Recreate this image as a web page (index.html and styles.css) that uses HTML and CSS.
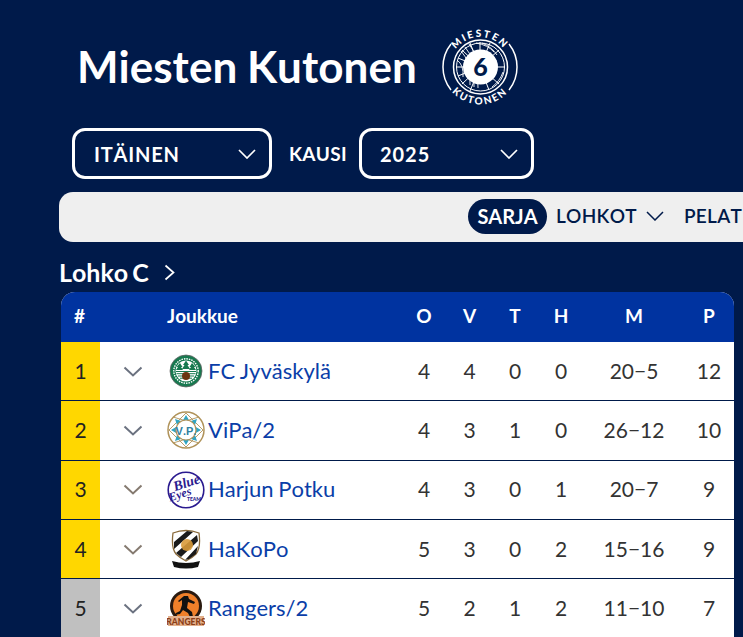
FILE: index.html
```html
<!DOCTYPE html>
<html lang="fi">
<head>
<meta charset="utf-8">
<title>Miesten Kutonen</title>
<link rel="stylesheet" href="styles.css">
</head>
<body>
<main class="page">
  <header class="head">
    <h1 class="title">Miesten Kutonen</h1>
    <svg class="brand" width="80" height="84" viewBox="0 0 80 84">
      <defs>
        <path id="arcTop" d="M10 42a30 30 0 0 1 60 0"/>
        <path id="arcBot" d="M2.500 42a37.500 37.500 0 0 0 75 0"/>
      </defs>
      <text class="brand-t"><textPath href="#arcTop" startOffset="50%" text-anchor="middle">MIESTEN</textPath></text>
      <text class="brand-t"><textPath href="#arcBot" startOffset="50%" text-anchor="middle">KUTONEN</textPath></text>
      <path class="brand-l" d="M11 19A37 37 0 0 0 11 65M69 19A37 37 0 0 1 69 65" stroke-width="1.500"/>
      <circle class="brand-l" cx="40.500" cy="42" r="27" stroke-width="1.500"/>
      <circle class="brand-l" cx="40.500" cy="42" r="24" stroke-width="1"/>
      <path class="brand-l" stroke-width="1" d="M18 33L40 42M16 42H40M18 51L40 42M22 25L40 42M22 59L40 42M30 18L40 42M30 66L40 42M40 17V42M50 18L40 42M49 65L40 42M59 25L40 42M59 59L40 42M65 42H40"/>
      <path class="brand-l" stroke-width=".9" d="M17 35Q24 40 23 52M21 26Q31 36 30 60M25 22Q35 32 34 62M29 19Q38 28 38 63M42 18Q52 22 57 30M36 18Q48 20 54 27M52 62Q60 56 63 47"/>
      <circle class="brand-c" cx="40.500" cy="42" r="17.500"/>
      <text class="brand-6" x="40.500" y="51" text-anchor="middle">6</text>
    </svg>
  </header>

  <div class="filters">
    <div class="select select-wide"><span>ITÄINEN</span>
      <svg class="chev" width="18" height="10" viewBox="0 0 18 10"><path d="M1 1l8 8 8-8"/></svg>
    </div>
    <span class="filter-label">KAUSI</span>
    <div class="select select-narrow"><span>2025</span>
      <svg class="chev" width="18" height="10" viewBox="0 0 18 10"><path d="M1 1l8 8 8-8"/></svg>
    </div>
  </div>

  <nav class="nav">
    <span class="pill">SARJA</span>
    <span class="nav-item">LOHKOT
      <svg class="nav-chev" width="18" height="10" viewBox="0 0 18 10"><path d="M1 1l8 8 8-8"/></svg>
    </span>
    <span class="nav-item nav-last">PELAT</span>
  </nav>

  <h2 class="group">Lohko C
    <svg class="group-chev" width="11" height="17" viewBox="0 0 11 17"><path d="M1.500 1.500l8 7-8 7"/></svg>
  </h2>

  <section class="table">
    <div class="row row-head">
      <span class="c-rank">#</span><span></span><span class="c-team">Joukkue</span>
      <span class="num">O</span><span class="num">V</span><span class="num">T</span><span class="num">H</span><span class="num">M</span><span class="num">P</span>
    </div>

    <div class="row">
      <span class="c-rank yellow">1</span>
      <span class="c-exp"><svg class="exp" width="20" height="11" viewBox="0 0 20 11"><path d="M1.500 1.500l8.500 8 8.500-8"/></svg></span>
      <span class="c-team">
        <svg class="crest" width="38" height="38" viewBox="0 0 38 38">
          <circle cx="19" cy="19" r="16" fill="#17794f" stroke="#666" stroke-width=".8"/>
          <circle cx="19" cy="19" r="12.200" fill="none" stroke="#fff" stroke-width="1.400" stroke-dasharray="1.500 1"/>
          <circle cx="19" cy="19" r="10.500" fill="#fff"/>
          <path fill="#17794f" d="M19 8.500l3 4.500h-1.500l2.500 4h-8l2.500-4H16zM13 11l2.500 4H14l2 3h-7l2-3H9.500zM25 11l-2.500 4H24l-2 3h7l-2-3h1.500z"/>
          <path stroke="#17794f" stroke-width="1" d="M9 19.500h20M9.500 21.700h19M11 24h16M13 26.200h12"/>
          <circle cx="19" cy="24" r="4" fill="#6b3410"/>
        </svg>
        <a class="name">FC Jyväskylä</a>
      </span>
      <span class="num">4</span><span class="num">4</span><span class="num">0</span><span class="num">0</span><span class="num">20−5</span><span class="num">12</span>
    </div>

    <div class="row">
      <span class="c-rank yellow">2</span>
      <span class="c-exp"><svg class="exp" width="20" height="11" viewBox="0 0 20 11"><path d="M1.500 1.500l8.500 8 8.500-8"/></svg></span>
      <span class="c-team">
        <svg class="crest" width="38" height="38" viewBox="0 0 38 38">
          <circle cx="19" cy="19" r="18" fill="#fff" stroke="#b0935a" stroke-width="1.500"/>
          <path fill="none" stroke="#b0935a" stroke-width=".9" d="M19 2L26 9 36 19 26 29 19 36 12 29 2 19 12 9zM6 6L16 9M32 6L22 9M6 32L16 29M32 32L22 29"/>
          <path fill="#2fa5c4" d="M19 4l3.500 6h-7zM19 34l-3.500-6h7zM4 19l6-3.500v7zM34 19l-6 3.500v-7zM8 8l6 2-4 4zM30 8l-2 6-4-4zM8 30l2-6 4 4zM30 30l-6-2 4-4z"/>
          <circle cx="19" cy="19" r="10" fill="#fff" stroke="#b0935a" stroke-width="1.200"/>
          <text class="crest-vp" x="19" y="23.500" text-anchor="middle">V.P.</text>
        </svg>
        <a class="name">ViPa/2</a>
      </span>
      <span class="num">4</span><span class="num">3</span><span class="num">1</span><span class="num">0</span><span class="num">26−12</span><span class="num">10</span>
    </div>

    <div class="row">
      <span class="c-rank yellow">3</span>
      <span class="c-exp"><svg class="exp exp-warm" width="20" height="11" viewBox="0 0 20 11"><path d="M1.500 1.500l8.500 8 8.500-8"/></svg></span>
      <span class="c-team">
        <svg class="crest" width="38" height="38" viewBox="0 0 38 38">
          <circle cx="19" cy="19" r="17.800" fill="#fff" stroke="#2a1a8f" stroke-width="1.600"/>
          <text class="crest-blue" x="21" y="16" text-anchor="middle" transform="rotate(-18 21 16)">Blue</text>
          <text class="crest-eyes" x="14" y="27" text-anchor="middle" transform="rotate(-18 14 27)">Eyes</text>
          <text class="crest-team" x="27" y="30" text-anchor="middle">TEAM</text>
        </svg>
        <a class="name">Harjun Potku</a>
      </span>
      <span class="num">4</span><span class="num">3</span><span class="num">0</span><span class="num">1</span><span class="num">20−7</span><span class="num">9</span>
    </div>

    <div class="row">
      <span class="c-rank yellow">4</span>
      <span class="c-exp"><svg class="exp exp-warm" width="20" height="11" viewBox="0 0 20 11"><path d="M1.500 1.500l8.500 8 8.500-8"/></svg></span>
      <span class="c-team">
        <svg class="crest" width="38" height="42" viewBox="0 0 38 42">
          <path fill="#fff" stroke="#8a6a3a" stroke-width="1.300" d="M6 5Q19 0 32 5Q34 20 29 26Q25 30 19 33Q13 30 9 26Q4 20 6 5z"/>
          <path fill="#1a1a1a" d="M7 14L20 3l6 1L7 21zM9 25L30 7l1 6L14 29zM18 32L31 18l-2 8-7 5z"/>
          <circle cx="20" cy="17" r="6" fill="#d89a3a" opacity=".9"/>
          <path fill="#111" d="M5 33q14 4 28 0l-2 6q-12 3-24 0z"/>
        </svg>
        <a class="name">HaKoPo</a>
      </span>
      <span class="num">5</span><span class="num">3</span><span class="num">0</span><span class="num">2</span><span class="num">15−16</span><span class="num">9</span>
    </div>

    <div class="row">
      <span class="c-rank grey">5</span>
      <span class="c-exp"><svg class="exp" width="20" height="11" viewBox="0 0 20 11"><path d="M1.500 1.500l8.500 8 8.500-8"/></svg></span>
      <span class="c-team">
        <svg class="crest" width="38" height="38" viewBox="0 0 38 38">
          <circle cx="19" cy="17" r="16" fill="#2a1a10"/>
          <circle cx="19" cy="17" r="13" fill="#f0802a"/>
          <path fill="#111" d="M17 7h4l1 3 6 3-1 2-6-2-1 6 5 4 1 5h-3l-2-4-5-3-3 4-5 1 1-2 4-2 2-6v-5l-3 2-1-1z"/>
          <rect x="1" y="27" width="36" height="10" fill="#e3b08c"/>
          <text class="crest-rangers" x="19" y="35.500" text-anchor="middle">RANGERS</text>
        </svg>
        <a class="name">Rangers/2</a>
      </span>
      <span class="num">5</span><span class="num">2</span><span class="num">1</span><span class="num">2</span><span class="num">11−10</span><span class="num">7</span>
    </div>
  </section>
</main>
</body>
</html>
```

FILE: styles.css
```css
* { box-sizing: border-box; }
html, body { margin: 0; height: 100%; }
body {
  background: #001a4a;
  color: #fff;
  font-family: Lato, "Liberation Sans", sans-serif;
  font-kerning: none;
  overflow: hidden;
}
.page { width: 743px; height: 637px; overflow: hidden; padding-top: 16px; }

.head { display: flex; align-items: center; height: 102px; padding-left: 78px; }
.title { margin: -2px 0 0 -1px; font-size: 44px; font-weight: 700; line-height: 1; width: 363px; flex: none; word-spacing: -1px; }
.brand { flex: none; }
.brand-t { fill: #fff; font-size: 10px; font-weight: 900; letter-spacing: 1.900px; }
.brand-l { fill: none; stroke: #fff; }
.brand-c { fill: #fff; }
.brand-6 { fill: #001a4a; font-size: 25px; font-weight: 900; }

.filters { display: flex; align-items: center; height: 51px; margin: 10px 0 13px 72px; }
.select {
  display: flex; align-items: center; justify-content: space-between;
  height: 51px; border: 3px solid #fff; border-radius: 13px;
  padding: 0 13px 0 19px; font-size: 20px; font-weight: 700; letter-spacing: .8px;
}
.select-wide { width: 200px; }
.select-narrow { width: 175px; padding-left: 18px; letter-spacing: 1px; }
.filter-label { font-size: 19px; font-weight: 700; margin: 0 12px 0 17px; letter-spacing: .3px; }
.chev { fill: none; stroke: #fff; stroke-width: 1.700; }

.nav {
  display: flex; align-items: center; height: 50px; margin-left: 59px; width: 760px;
  padding-left: 409px; background: #efefef; border-radius: 14px; color: #001a4a;
  font-size: 19px; white-space: nowrap;
}
.pill {
  background: #001a4a; color: #fff; font-weight: 700; border-radius: 18px; height: 35px;
  width: 79px; display: flex; align-items: center; justify-content: center; margin-top: -2px;
  font-size: 20px;
}
.nav-item { display: flex; align-items: center; margin-left: 9px; margin-top: -3px; letter-spacing: .3px; font-weight: 600; }
.nav-chev { fill: none; stroke: #001a4a; stroke-width: 1.500; margin-left: 9px; }
.nav-last { margin-left: 20px; }

.group { display: flex; align-items: center; margin: 15px 0 5px 59px; height: 30px; font-size: 25px; font-weight: 700; word-spacing: -2px; }
.group-chev { fill: none; stroke: #fff; stroke-width: 1.700; margin-left: 15px; }

.table { margin-left: 61px; width: 673px; background: #fff; border-radius: 14px 14px 0 0; overflow: hidden; }
.row {
  display: grid; grid-template-columns: 39px 67px 234px 46px 45px 46px 46px 100px 50px;
  height: 59.330px; border-bottom: 1px solid #001a4a; align-items: stretch;
  color: #333; font-size: 21px;
}
.row > span { display: flex; align-items: center; }
.row > .num, .row > .c-rank { padding-bottom: 2px; }
.row-head { height: 50px; background: #0033a0; color: #fff; font-weight: 700; font-size: 19px; border-bottom: 0; }
.row-head > span, .row-head > .num, .row-head > .c-rank { padding-bottom: 3px; }
.num { justify-content: center; }
.c-rank { justify-content: center; }
.row-head .c-rank { padding-right: 2px; }
.yellow { background: #ffd700; color: #222; }
.grey { background: #c0c0c0; color: #222; }
.c-exp { justify-content: center; padding-right: 2px; }
.exp { fill: none; stroke: #6b7280; stroke-width: 2; }
.exp-warm { stroke: #857a70; }
.crest { flex: none; }
.name { color: #0a3ea8; font-size: 22px; margin: -2px 0 0 3px; white-space: nowrap; word-spacing: -1px; }
.crest-vp { fill: #2f80a0; font-size: 11px; font-weight: 700; font-family: "Liberation Sans", sans-serif; }
.crest-blue, .crest-eyes { fill: #2a1a8f; font-family: "Liberation Serif", serif; font-style: italic; font-weight: 700; }
.crest-blue { font-size: 14px; }
.crest-eyes { font-size: 12px; }
.crest-team { fill: #2a1a8f; font-size: 5px; font-weight: 900; }
.crest-rangers { fill: #8a3d16; font-size: 8.500px; font-weight: 900; }
```
